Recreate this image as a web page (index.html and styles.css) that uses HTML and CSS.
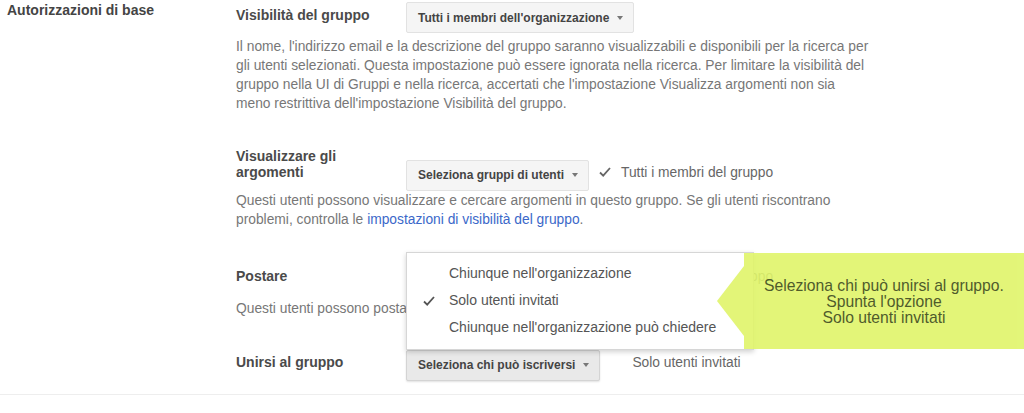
FILE: index.html
```html
<!DOCTYPE html>
<html lang="it">
<head>
    <meta charset="UTF-8">
    <meta name="viewport" content="width=device-width, initial-scale=1.0">
    <title>Autorizzazioni di base</title>
    <link rel="stylesheet" href="styles.css">
</head>
<body>
    <div class="page">
        <div class="group-title">Autorizzazioni di base</div>

        <div class="settings">
            <div class="setting">
                <div class="setting-row">
                    <div class="setting-label">Visibilità del gruppo</div>
                    <button class="select-btn">Tutti i membri dell'organizzazione<span class="caret"></span></button>
                </div>
                <p class="setting-help">Il nome, l'indirizzo email e la descrizione del gruppo saranno visualizzabili e disponibili per la ricerca per gli utenti selezionati. Questa impostazione può essere ignorata nella ricerca. Per limitare la visibilità del gruppo nella UI di Gruppi e nella ricerca, accertati che l'impostazione Visualizza argomenti non sia<br>meno restrittiva dell'impostazione Visibilità del gruppo.</p>
            </div>

            <div class="setting setting-topics">
                <div class="setting-row">
                    <div class="setting-label">Visualizzare gli argomenti</div>
                    <button class="select-btn">Seleziona gruppi di utenti<span class="caret"></span></button>
                    <span class="setting-value">
                        <svg class="check" width="12" height="10" viewBox="0 0 12 10"><path d="M1 5.5 L4.2 8.6 L11 1" fill="none" stroke="#666" stroke-width="1.8"/></svg>
                        Tutti i membri del gruppo
                    </span>
                </div>
                <p class="setting-help">Questi utenti possono visualizzare e cercare argomenti in questo gruppo. Se gli utenti riscontrano problemi, controlla le <a href="#">impostazioni di visibilità del gruppo</a>.</p>
            </div>

            <div class="setting setting-post">
                <div class="setting-row">
                    <div class="setting-label">Postare</div>
                    <button class="select-btn">Seleziona gruppi di utenti<span class="caret"></span></button>
                    <span class="setting-value">
                        <svg class="check" width="12" height="10" viewBox="0 0 12 10"><path d="M1 5.5 L4.2 8.6 L11 1" fill="none" stroke="#666" stroke-width="1.8"/></svg>
                        Tutti i membri del gruppo
                    </span>
                </div>
                <p class="setting-help">Questi utenti possono postare messaggi in questo gruppo.</p>
            </div>

            <div class="setting setting-join">
                <div class="setting-row">
                    <div class="setting-label">Unirsi al gruppo</div>
                    <div class="select-wrap">
                        <ul class="select-menu">
                            <li>Chiunque nell'organizzazione</li>
                            <li class="selected">
                                <svg class="check" width="12" height="10" viewBox="0 0 12 10"><path d="M1 5.5 L4.2 8.6 L11 1" fill="none" stroke="#555" stroke-width="1.8"/></svg>
                                Solo utenti invitati
                            </li>
                            <li>Chiunque nell'organizzazione può chiedere</li>
                        </ul>
                        <button class="select-btn open">Seleziona chi può iscriversi<span class="caret"></span></button>
                    </div>
                    <span class="setting-value">
                        <svg class="check hidden" width="12" height="10" viewBox="0 0 12 10"><path d="M1 5.5 L4.2 8.6 L11 1" fill="none" stroke="#666" stroke-width="1.8"/></svg>
                        Solo utenti invitati
                    </span>
                </div>
            </div>
        </div>

        <!-- tutorial note over the screenshot -->
        <div class="callout">Seleziona chi può unirsi al gruppo.<br>Spunta l'opzione<br>Solo utenti invitati</div>
    </div>
</body>
</html>
```

FILE: styles.css
```css
/* page */
body { margin: 0; background: #fff; font-family: "Liberation Sans", Arial, sans-serif; color: #555; }
.page { position: relative; display: flex; padding: 2px 0 13px; border-bottom: 1px solid #eee; }
.group-title { flex: 0 0 229px; padding-left: 7px; font-size: 14px; font-weight: bold; line-height: 16px; color: #444; }
.settings { flex: 1; }

/* settings rows */
.setting { margin-bottom: 35px; }
.setting-topics { margin-bottom: 35px; }
.setting-topics .setting-help { margin-top: 0; }
.setting-post { margin-bottom: 32px; }
.setting-join { margin-bottom: 0; }
.setting-row { display: flex; align-items: last baseline; }
.setting-label { flex: 0 0 160px; margin-right: 10px; font-size: 14px; font-weight: bold; line-height: 16px; color: #4a4a4a; }
.setting-help { margin: 4px 0 0; max-width: 640px; font-size: 13.8px; line-height: 19px; color: #777; }
.setting-help a { color: #3b68c9; text-decoration: none; }
.setting-value { display: inline-flex; align-items: baseline; margin-left: 10px; font-size: 13.8px; color: #666; }
.setting-value .check { margin-right: 10px; }
.check.hidden { visibility: hidden; }

/* select buttons */
.select-btn { display: inline-flex; align-items: center; height: 31px; padding: 0 10px 0 11px; border: 1px solid #e2e2e2; border-radius: 2px; background: #f5f5f5; font-family: inherit; font-size: 12px; font-weight: bold; color: #444; cursor: pointer; }
.select-btn.open { background: #e9e9e9; border-color: #d4d4d4; box-shadow: 0 1px 2px rgba(0, 0, 0, 0.12); }
.caret { width: 0; height: 0; margin-left: 8px; border-left: 3.5px solid transparent; border-right: 3.5px solid transparent; border-top: 4px solid #777; }

/* open menu */
.select-wrap { position: relative; display: inline-flex; }
.select-menu { position: absolute; left: 0; bottom: 100%; z-index: 2; width: 346px; margin: 0; padding: 7px 0 8px; list-style: none; background: #fff; border: 1px solid #d6d6d6; box-shadow: 0 2px 5px rgba(0, 0, 0, 0.18); }
.select-menu li { position: relative; padding-left: 42px; font-size: 14px; line-height: 27px; color: #555; white-space: nowrap; }
.select-menu .check { position: absolute; left: 16px; top: 9px; }

/* yellow note */
.callout { position: absolute; top: 253px; right: 0; z-index: 3; width: 280px; height: 96px; padding-top: 25px; box-sizing: border-box; background: #e0f56a; opacity: 0.9; text-align: center; font-size: 15.7px; line-height: 16px; color: #3c4a14; }
.callout::before { content: ""; position: absolute; right: 100%; top: 13px; border-top: 35px solid transparent; border-bottom: 35px solid transparent; border-right: 27px solid #e0f56a; }
```
